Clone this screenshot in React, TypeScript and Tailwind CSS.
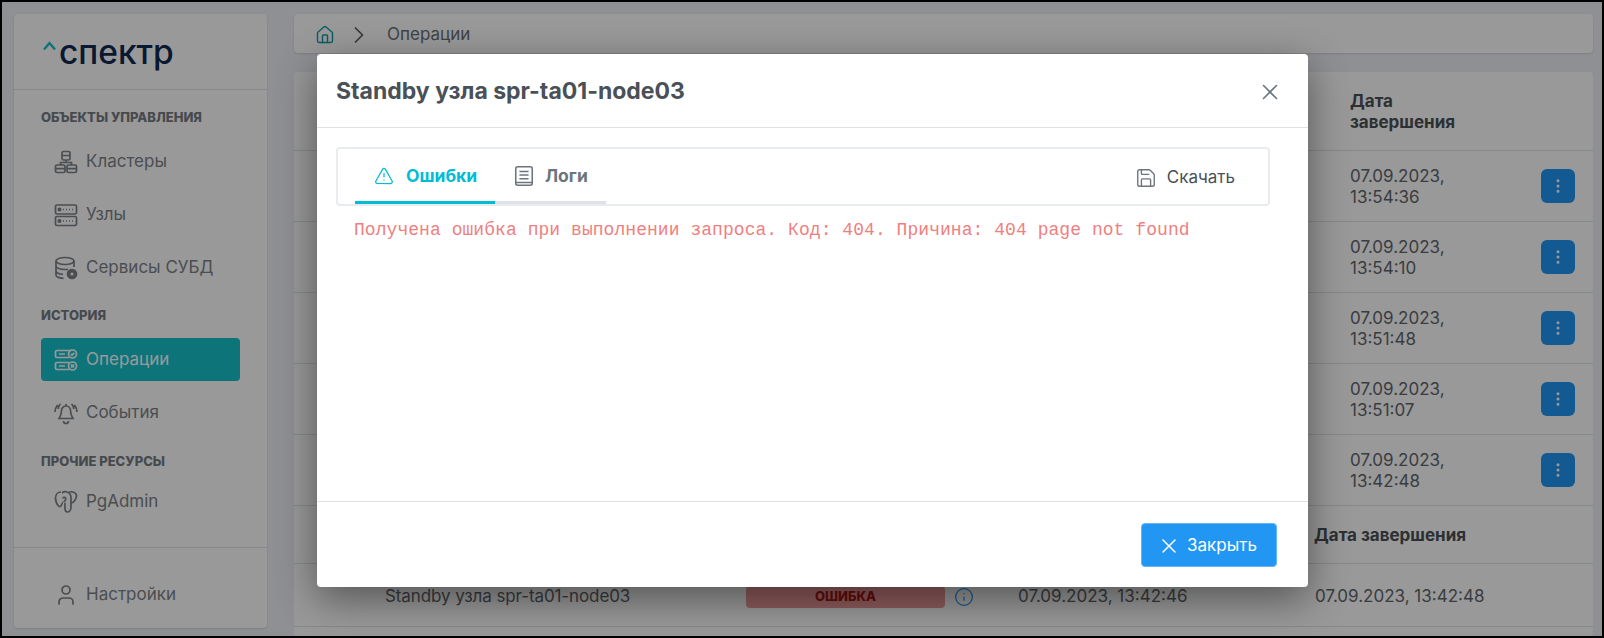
import { ChevronRight, EllipsisVertical, House, Info, Save, TriangleAlert, User, X } from "lucide-react";
import type { ReactNode } from "react";

const FONT = { fontFamily: "Inter, 'Noto Sans', sans-serif" };

function Svg({ children, className }: { children: ReactNode; className?: string }) {
  return (
    <svg viewBox="0 0 24 24" fill="none" stroke="currentColor" strokeWidth="1.7" className={className ?? "h-6 w-6 shrink-0"}>
      {children}
    </svg>
  );
}

function ClusterIcon() {
  return (
    <Svg>
      <rect x="8" y="1.5" width="8" height="8.500" rx="1.500" />
      <path d="M8 5.500h8M12 10v3M6.500 15v-2.500h11V15" />
      <rect x="1.500" y="15" width="9.500" height="7.500" rx="1.500" />
      <rect x="13" y="15" width="9.500" height="7.500" rx="1.500" />
      <path d="M1.500 18.700h9.500M13 18.700h9.500" />
    </Svg>
  );
}

function NodesIcon() {
  return (
    <Svg>
      <rect x="1.500" y="2" width="21" height="9" rx="1.500" />
      <rect x="1.500" y="13.500" width="21" height="9" rx="1.500" />
      <circle cx="5.500" cy="6.500" r="1.200" fill="currentColor" />
      <circle cx="5.500" cy="18" r="1.200" fill="currentColor" />
      <path d="M9 6.500h1M12 6.500h1M15 6.500h1M18 6.500h1M9 18h1M12 18h1M15 18h1M18 18h1" />
    </Svg>
  );
}

function DbIcon() {
  return (
    <Svg>
      <ellipse cx="11" cy="5" rx="9" ry="3.500" />
      <path d="M2 5v14c0 1.800 3.500 3 7.500 3.300M20 5v6M2 10c0 2 4 3.500 9 3.500 1 0 2-.1 3-.2M2 15c0 1.800 3 3 7 3.400" />
      <circle cx="18" cy="18" r="4.500" fill="currentColor" />
      <circle cx="18" cy="18" r="1.500" fill="#fff" stroke="none" />
    </Svg>
  );
}

function OpsIcon() {
  return (
    <Svg>
      <path d="M15 9.500H3A1.500 1.500 0 0 1 1.500 8V4A1.500 1.500 0 0 1 3 2.500h14" />
      <path d="M15 21.500H3A1.500 1.500 0 0 1 1.500 20v-4A1.500 1.500 0 0 1 3 14.500h12" />
      <path d="M5 6h6M5 18h6" />
      <circle cx="18.500" cy="6" r="4" />
      <circle cx="18.500" cy="18" r="4" />
      <path d="M16.800 6l1.200 1.300 2.200-2.400M17 16.500l3 3M20 16.500l-3 3" />
    </Svg>
  );
}

function BellIcon() {
  return (
    <Svg>
      <path d="M12 5a4.500 4.500 0 0 1 4.500 4.500c0 4.500 1.500 6 2.500 8H5c1-2 2.500-3.500 2.500-8A4.500 4.500 0 0 1 12 5zM12 3v2M9.500 20a2.500 2.500 0 0 0 5 0" />
      <path d="M3.500 4C2 6 1 8 1 11M20.500 4c1.500 2 2.500 4 2.500 7M6.500 3C5 4 4.300 5.500 4.200 8M17.500 3c1.500 1 2.200 2.500 2.300 5" />
    </Svg>
  );
}

function PgIcon() {
  return (
    <Svg>
      <path d="M7 2C3.500 2 1.500 4.500 1.500 8c0 3 1.200 6 3 8 1 1 2.500.5 3-1 .5-1.500 1-2.500 1.500-2.500" />
      <path d="M8 3c1.500-1.200 3.500-1.500 5-1 3 .8 4 3.500 4 6v9c0 2.500-1.500 5-3.500 5S11 20.500 11 18v-5" />
      <path d="M15 2c3-.8 7 .5 7.500 3 .3 2-1 4.500-2.500 6.500-1 1.300-3 1.500-3 1.500M9 8.500c0-1.500 2-1.500 2.500-.5s0 3-2 4" />
    </Svg>
  );
}

function NavItem({ icon, label, active }: { icon: ReactNode; label: string; active?: boolean }) {
  return (
    <div
      className={`flex h-[43px] items-center gap-2 rounded pl-[13px] text-[17px] ${
        active ? "bg-[#17c1cb] text-white" : "text-[#7d8287]"
      }`}
    >
      {icon}
      <span>{label}</span>
    </div>
  );
}

function SectionLabel({ children, className }: { children: ReactNode; className: string }) {
  return <div className={`h-4 text-[13px] leading-4 font-extrabold text-[#767c82] uppercase ${className}`}>{children}</div>;
}

function Sidebar() {
  return (
    <aside className="flex w-[253px] shrink-0 flex-col rounded bg-white shadow-sm">
      <div className="flex h-[76px] items-center gap-[3px] border-b border-[#dfe3e6] pl-[29px]">
        <svg viewBox="0 0 13 9" fill="none" stroke="#17c1cb" strokeWidth="2.400" className="mb-3 h-[9px] w-[13px]">
          <path d="M1 8.500L6.500 2 12 8.500" />
        </svg>
        <span className="pt-0.5 text-[33.500px] leading-none font-medium text-[#102a52]">спектр</span>
      </div>
      <div className="flex flex-1 flex-col px-[27px] pt-[19px]">
        <SectionLabel className="mb-[15px]">Объекты управления</SectionLabel>
        <div className="flex flex-col gap-2.5">
          <NavItem icon={<ClusterIcon />} label="Кластеры" />
          <NavItem icon={<NodesIcon />} label="Узлы" />
          <NavItem icon={<DbIcon />} label="Сервисы СУБД" />
        </div>
        <SectionLabel className="mt-[18px] mb-[15px]">История</SectionLabel>
        <div className="flex w-[199px] flex-col gap-2.5">
          <NavItem icon={<OpsIcon />} label="Операции" active />
          <NavItem icon={<BellIcon />} label="События" />
        </div>
        <SectionLabel className="mt-[19px] mb-[11px]">Прочие ресурсы</SectionLabel>
        <NavItem icon={<PgIcon />} label="PgAdmin" />
      </div>
      <div className="h-[81px] border-t border-[#dfe3e6] px-[27px] pt-[25px]">
        <NavItem icon={<User className="h-6 w-6 shrink-0" strokeWidth={1.7} />} label="Настройки" />
      </div>
    </aside>
  );
}

const ROWS = [
  ["07.09.2023,", "13:54:36"],
  ["07.09.2023,", "13:54:10"],
  ["07.09.2023,", "13:51:48"],
  ["07.09.2023,", "13:51:07"],
  ["07.09.2023,", "13:42:48"],
];

function Table() {
  return (
    <div className="mt-[19px] flex-1 rounded bg-white text-[#5f666c]">
      <div className="flex h-[79px] items-center justify-end border-b border-[#dfe3e6] pt-0.5 pr-[52px]">
        <div className="w-[191px] text-[17px] leading-[21px] font-bold text-[#4a5056]">
          Дата
          <br />
          завершения
        </div>
      </div>
      {ROWS.map((r) => (
        <div key={r[1]} className="flex h-[71px] items-center justify-end border-b border-[#dfe3e6] pr-[18px] text-[17px] leading-[21px]">
          <div className="w-[191px] pt-0.5">
            {r[0]}
            <br />
            {r[1]}
          </div>
          <button className="flex h-[34px] w-[34px] items-center justify-center rounded-md bg-[#2196f3] text-white">
            <EllipsisVertical className="h-[18px] w-[18px]" strokeWidth={2} />
          </button>
        </div>
      ))}
      <div className="flex h-[58px] items-center border-b border-[#dfe3e6] pt-0.5 pl-[1020px] text-[17px] font-bold text-[#4a5056]">
        Дата завершения
      </div>
      <div className="flex h-[63px] items-center border-b border-[#dfe3e6] pt-[3px] pl-[91px] text-[17px]">
        <div className="w-[361px] tracking-[-0.1px]">Standby узла spr-ta01-node03</div>
        <div className="flex h-[22px] w-[199px] items-center justify-center rounded bg-[#ef9a9a] text-[13px] font-extrabold text-[#a81616]">
          ОШИБКА
        </div>
        <Info className="ml-[9px] h-5 w-5 text-[#2196f3]" strokeWidth={1.5} />
        <div className="ml-[44px] w-[297px]">07.09.2023, 13:42:46</div>
        <div>07.09.2023, 13:42:48</div>
      </div>
    </div>
  );
}

function Modal() {
  return (
    <div className="absolute top-[52px] left-[315px] flex h-[533px] w-[991px] flex-col rounded bg-white shadow-[0_12px_40px_rgba(0,0,0,0.45)]">
      <div className="flex h-[74px] items-center justify-between border-b border-[#dee2e6] pt-0.5 pr-[25px] pl-[19px]">
        <h2 className="text-[23px] font-bold text-[#495057]">Standby узла spr-ta01-node03</h2>
        <X className="h-[26px] w-[26px] text-[#6c757d]" strokeWidth={1.5} />
      </div>
      <div className="flex-1 pt-[19px] pr-[38px] pl-[19px]">
        <div className="flex h-[59px] items-stretch justify-between rounded border-2 border-[#e9ecef] pl-[17px]">
          <div className="flex">
            <div className="flex w-[140px] items-center gap-3 border-b-[3px] border-[#00bcd4] pt-0.5 pl-[19px] text-[17.500px] font-bold text-[#00bcd4]">
              <TriangleAlert className="h-5 w-5" strokeWidth={1.5} />
              Ошибки
            </div>
            <div className="flex w-[111px] items-center gap-2.5 border-b-[3px] border-[#dee2e6] pt-0.5 pl-[18px] text-[17.500px] font-bold text-[#6c757d]">
              <Svg className="h-[22px] w-[22px]">
                <rect x="3" y="2" width="18" height="20" rx="2" />
                <path d="M7 7h10M7 11h10M7 15h10M3 19h18" />
              </Svg>
              Логи
            </div>
          </div>
          <div className="flex items-center gap-2.5 pt-0.5 pr-[33px] text-[17px] text-[#495057]">
            <Save className="h-[22px] w-[22px] text-[#6c757d]" strokeWidth={1.5} />
            Скачать
          </div>
        </div>
        <p className="mt-3 pl-[18px] font-['Liberation_Mono',monospace] text-lg leading-6 tracking-[0.05px] text-[#f08080]">
          Получена ошибка при выполнении запроса. Код: 404. Причина: 404 page not found
        </p>
      </div>
      <div className="flex h-[86px] items-start justify-end border-t border-[#dee2e6] pt-[21px] pr-[31px]">
        <button className="flex h-[44px] w-[136px] items-center justify-center gap-1.5 rounded border border-[#64b5f6] bg-[#2196f3] pt-px pr-1 text-[17px] text-white">
          <X className="h-6 w-6" strokeWidth={1.5} />
          Закрыть
        </button>
      </div>
    </div>
  );
}

export default function App() {
  return (
    <div className="relative h-[638px] w-[1604px] overflow-hidden border-2 border-black bg-[#eef1f5]" style={FONT}>
      <div className="flex h-full gap-[27px] pt-3 pr-[9px] pl-3">
        <div className="flex h-[614px]">
          <Sidebar />
        </div>
        <main className="flex min-w-0 flex-1 flex-col">
          <div className="flex h-[39px] shrink-0 items-center rounded bg-white pt-0.5 pl-[21px] text-[17px] text-[#6a7076] shadow-sm">
            <House className="h-5 w-5 text-[#159aa3]" strokeWidth={1.7} />
            <ChevronRight className="ml-2.5 h-7 w-7 text-[#5a6066]" strokeWidth={1.5} />
            <span className="ml-3.5">Операции</span>
          </div>
          <Table />
        </main>
      </div>
      <div className="absolute inset-0 bg-black/40" />
      <Modal />
    </div>
  );
}
